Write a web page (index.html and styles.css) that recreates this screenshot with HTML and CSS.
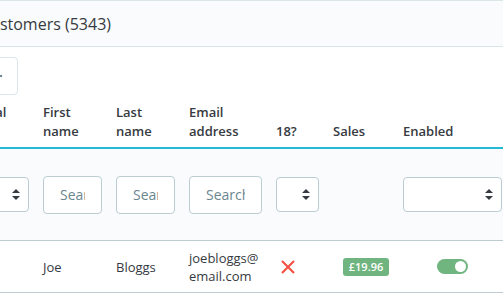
FILE: index.html
```html
<!DOCTYPE html>
<html lang="en">
<head>
    <meta charset="UTF-8">
    <meta name="viewport" content="width=device-width, initial-scale=1.0">
    <title>Customers</title>
    <link rel="stylesheet" href="styles.css">
</head>
<body>

    <div class="card-header">
        <h3 class="card-title">Customers (5343)</h3>
    </div>

    <div class="toolbar">
        <button class="tool-btn" type="button">
            <svg width="4" height="4" viewBox="0 0 4 4"><circle cx="2" cy="2" r="1.2" fill="#6c868e"/></svg>
        </button>
    </div>

    <div class="grid-row head-row">
        <div>Social<br>title</div>
        <div>First<br>name</div>
        <div>Last<br>name</div>
        <div>Email<br>address</div>
        <div>18?</div>
        <div>Sales</div>
        <div>Enabled</div>
    </div>

    <div class="grid-row filter-row">
        <div class="select">
            <svg class="arrows" width="8" height="11" viewBox="0 0 8 11"><path d="M4 0L8 4H0Z M4 11L0 7H8Z"/></svg>
        </div>
        <input class="search" type="text" placeholder="Search first name">
        <input class="search" type="text" placeholder="Search last name">
        <input class="search" type="text" placeholder="Search email">
        <div class="select">
            <svg class="arrows" width="8" height="11" viewBox="0 0 8 11"><path d="M4 0L8 4H0Z M4 11L0 7H8Z"/></svg>
        </div>
        <div></div>
        <div class="select">
            <svg class="arrows" width="8" height="11" viewBox="0 0 8 11"><path d="M4 0L8 4H0Z M4 11L0 7H8Z"/></svg>
        </div>
    </div>

    <div class="grid-row data-row">
        <div></div>
        <div>Joe</div>
        <div>Bloggs</div>
        <div>joebloggs@<wbr>email.com</div>
        <div class="cell-no">
            <svg width="14" height="14" viewBox="0 0 14 14"><path d="M1 1L13 13M13 1L1 13" stroke="#f54c3e" stroke-width="2"/></svg>
        </div>
        <div><span class="badge">£19.96</span></div>
        <div class="cell-toggle"><span class="toggle"><span class="knob"></span></span></div>
    </div>

</body>
</html>
```

FILE: styles.css
```css
body {
    margin: 0;
    font-family: "Open Sans", sans-serif;
    color: #363a41;
    background: #fff;
    overflow: hidden;
}
.card-header {
    height: 45px;
    display: flex;
    align-items: center;
    background: #fafbfc;
    border-top: 1px solid #dbe6e9;
    border-bottom: 1px solid #dbe6e9;
}
.card-title {
    margin: 0 0 0 -20px;
    font-size: 16px;
    font-weight: 400;
    white-space: nowrap;
}
.toolbar {
    padding-top: 10px;
}
.tool-btn {
    display: flex;
    align-items: center;
    margin-left: -22px;
    width: 40px;
    height: 38px;
    padding: 0 0 0 20px;
    background: #fff;
    border: 1px solid #dbe6e9;
    border-radius: 4px;
    box-sizing: border-box;
}
.grid-row {
    display: grid;
    grid-template-columns: 59px 59px 59px 73px 43px 56px 99px;
    column-gap: 14px;
    margin-left: -30px;
}
.head-row {
    padding: 8px 0 6px;
    align-items: end;
    font-size: 13px;
    font-weight: 600;
    line-height: 19px;
    border-bottom: 2px solid #25b9d7;
}
.filter-row {
    height: 91px;
    align-items: center;
    background: #fafbfc;
    border-bottom: 1px solid #bbcdd2;
}
.search {
    width: 100%;
    height: 38px;
    box-sizing: border-box;
    margin: 0;
    padding: 0 16px;
    font-family: "Open Sans", sans-serif;
    font-size: 14px;
    color: #363a41;
    background: #fff;
    border: 1px solid #bbcdd2;
    border-radius: 4px;
}
.search::placeholder {
    color: #6c868e;
}
.select {
    height: 35px;
    box-sizing: border-box;
    display: flex;
    align-items: center;
    justify-content: flex-end;
    padding-right: 8px;
    background: #fff;
    border: 1px solid #bbcdd2;
    border-radius: 4px;
}
.arrows {
    fill: #363a41;
}
.data-row {
    height: 51px;
    align-items: center;
    font-size: 13px;
    line-height: 18px;
    border-bottom: 1px solid #bbcdd2;
}
.cell-no {
    display: flex;
    padding-left: 5px;
}
.badge {
    display: inline-block;
    margin-left: 10px;
    width: 46px;
    height: 18px;
    line-height: 18px;
    text-align: center;
    font-size: 11px;
    font-weight: 600;
    color: #fff;
    background: #70b580;
    border-radius: 3px;
}
.cell-toggle {
    display: flex;
    justify-content: center;
}
.toggle {
    display: flex;
    justify-content: flex-end;
    align-items: center;
    width: 31px;
    height: 15px;
    padding: 0 2px;
    box-sizing: border-box;
    background: #70b580;
    border-radius: 8px;
}
.knob {
    width: 11px;
    height: 11px;
    background: #fff;
    border-radius: 50%;
}
```
